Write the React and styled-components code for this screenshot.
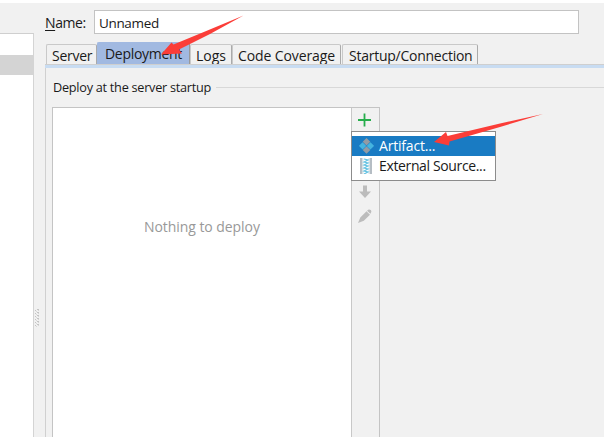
import React from "react";
import styled, { createGlobalStyle } from "styled-components";

const Global = createGlobalStyle`
  * { box-sizing: border-box; }
  body { margin: 0; background: #f1f1f1; overflow: hidden; }
`;

const Window = styled.div`
  position: relative;
  display: grid;
  grid-template-columns: 34px 11px 1fr;
  width: 604px;
  height: 437px;
  overflow: hidden;
  border-top: 3px solid #fff;
  background: #f1f1f1;
  color: #1a1a1a;
  font-family: "Open Sans", "Noto Sans", sans-serif;
  font-size: 14px;
  line-height: 20px;
  white-space: nowrap;
`;

const Text = styled.span`
  font-size: ${(p) => p.$size || 14}px;
  letter-spacing: ${(p) => p.$track || 0}px;
`;

const Tree = styled.aside`
  margin-top: 30px;
  padding-top: 21px;
  background: #fff;
  border-top: 1px solid #cfcfcf;
  border-right: 1px solid #d4d4d4;
`;

const TreeSelection = styled.div`
  height: 20px;
  background: #d4d4d4;
`;

const Splitter = styled.div`
  padding-top: 306px;
  svg { display: block; }
`;

const Editor = styled.main`
  display: flex;
  flex-direction: column;
  min-width: 0;
`;

const NameRow = styled.label`
  display: flex;
  flex: none;
  align-items: center;
  height: 24px;
  margin-top: 7px;
`;

const NameLabel = styled.div`
  width: 49px;
  padding-top: 1px;
  u { text-underline-offset: 2px; }
`;

const NameField = styled.div`
  width: 485px;
  height: 24px;
  padding: 2px 4px;
  border: 1px solid #c3c3c3;
  background: #fff;
`;

const Tabs = styled.nav`
  display: flex;
  flex: none;
  align-items: flex-end;
  height: 22px;
  margin-top: 8px;
  padding-left: 1px;
`;

const Tab = styled.div`
  width: ${(p) => p.$width}px;
  height: ${(p) => (p.$active ? 22 : 20)}px;
  margin-right: ${(p) => p.$gap || 0}px;
  padding-left: ${(p) => p.$pad}px;
  line-height: ${(p) => (p.$active ? 22 : 21)}px;
  border: 1px solid #c9c9c9;
  border-right-color: #aaa;
  border-bottom: 0;
  border-radius: 2px 2px 0 0;
  background: ${(p) => (p.$active ? "#a1b9e1" : "#f1f1f1")};
  ${(p) => p.$active && "border-color: #a1b9e1 #999 #a1b9e1 #a1b9e1;"}
`;

const Panel = styled.section`
  flex: 1;
  display: flex;
  flex-direction: column;
  border-left: 1px solid #d0d0d0;
`;

const Strip = styled.div`
  flex: none;
  height: 4px;
  margin-left: -1px;
  border-top: 1px solid #cfcfcf;
  background: #c8dcf2;
`;

const Body = styled.div`
  flex: 1;
  display: flex;
  flex-direction: column;
  padding-left: 6px;
`;

const GroupTitle = styled.div`
  display: flex;
  align-items: center;
  height: 20px;
  margin-top: 9px;
  padding-left: 1px;
  gap: 5px;
  &::after {
    content: "";
    flex: 1;
    height: 1px;
    background: #d8d8d8;
  }
`;

const ListFrame = styled.div`
  display: flex;
  flex: 1;
  width: 328px;
  margin-top: 10px;
  border: 1px solid #c4c4c4;
  border-bottom: 0;
`;

const EmptyList = styled.div`
  width: 299px;
  padding: 109px 0 0 91px;
  background: #fff;
  border-right: 1px solid #c8c8c8;
  color: #999;
`;

const Tools = styled.div`
  display: flex;
  flex-direction: column;
  padding: 5px 0 0 5px;
  svg { display: block; }
  svg + svg { margin-top: 58px; }
  svg + svg + svg { margin-top: 9px; }
`;

const Menu = styled.div`
  position: absolute;
  left: 351px;
  top: 128px;
  width: 145px;
  height: 50px;
  padding-top: 4px;
  border: 1px solid #8c8c8c;
  background: #fff;
`;

const MenuItem = styled.div`
  display: flex;
  align-items: center;
  gap: 5px;
  height: 20px;
  padding-left: 7px;
  background: ${(p) => (p.$active ? "#197bc3" : "#fff")};
  color: ${(p) => (p.$active ? "#fff" : "#1a1a1a")};
  svg { flex: none; }
`;

const Arrows = styled.svg`
  position: absolute;
  left: 0;
  top: -3px;
  pointer-events: none;
`;

const Grip = () => (
  <svg width="6" height="18" shapeRendering="crispEdges">
    {[0, 1, 2, 3, 4, 5].map((i) => (
      <g key={i} fill="#c4c4c4">
        <rect x="1" y={1 + i * 3} width="1" height="1" />
        <rect x="2" y={2 + i * 3} width="1" height="1" fill="#d8d8d8" />
        <rect x="3" y={i * 3} width="2" height="1" />
        <rect x="4" y={1 + i * 3} width="1" height="1" fill="#d5d5d5" />
      </g>
    ))}
  </svg>
);

const Plus = () => (
  <svg width="16" height="14" viewBox="0 0 16 14">
    <path d="M7.500.5v13M1 7h13" stroke="#27ae4c" strokeWidth="1.8" />
  </svg>
);

const Down = () => (
  <svg width="16" height="14" viewBox="0 0 16 14">
    <path d="M6 .5h4v6h4L8 13 2 6.500h4z" fill="#bcbcbc" />
  </svg>
);

const Pencil = () => (
  <svg width="16" height="16" viewBox="0 0 16 16">
    <path d="M1 15l2.300-5.500 6.200-6.200 3.500 3.500L6.800 12.700zM10.100 2.700l1-1q1.300-.8 2.700.4 1.100 1.300.2 2.700l-.7.9z" fill="#bcbcbc" />
  </svg>
);

const ArtifactIcon = () => (
  <svg width="15" height="16" viewBox="0 0 15 16">
    <path d="M7.500 0l3.800 3.800-3.800 3.800-3.800-3.800zM7.500 8.200l3.800 3.800-3.800 3.800L3.700 12z" fill="#929ba4" />
    <path d="M3.600 4.200l3.700 3.700-3.700 3.700L-.1 7.900zM11.400 4.200l3.700 3.700-3.700 3.700-3.700-3.700z" fill="#45b4df" />
  </svg>
);

const ArchiveIcon = () => (
  <svg width="15" height="16" viewBox="0 0 15 16">
    <path d="M1 0h2.500v16H1zM10.500 0h2.500v16h-2.500z" fill="#b5bdc4" />
    <path d="M3.500 0h1v16h-1zM9.500 0h1v16h-1z" fill="#dce3e7" />
    <path d="M5 1l4 1-4 2 4 1-4 2 4 1-4 2 4 1-4 2 4 1-4 2" fill="none" stroke="#64c2e2" strokeWidth="1.200" />
  </svg>
);

export default function App() {
  return (
    <>
      <Global />
      <Window>
        <Tree><TreeSelection /></Tree>
        <Splitter><Grip /></Splitter>
        <Editor>
          <NameRow>
            <NameLabel><Text $track={-0.4}><u>N</u>ame:</Text></NameLabel>
            <NameField><Text $size={13.5} $track={-0.35}>Unnamed</Text></NameField>
          </NameRow>
          <Tabs>
            <Tab $width={51} $pad={5}><Text $track={-0.25}>Server</Text></Tab>
            <Tab $width={93} $pad={7} $active><Text $track={-0.3}>Deployment</Text></Tab>
            <Tab $width={42} $pad={5}><Text>Logs</Text></Tab>
            <Tab $width={109} $pad={5} $gap={1}><Text $track={-0.1}>Code Coverage</Text></Tab>
            <Tab $width={136} $pad={6}><Text $track={-0.25}>Startup/Connection</Text></Tab>
          </Tabs>
          <Panel>
            <Strip />
            <Body>
              <GroupTitle><Text $size={12.7} $track={-0.26}>Deploy at the server startup</Text></GroupTitle>
              <ListFrame>
                <EmptyList><Text $track={-0.06}>Nothing to deploy</Text></EmptyList>
                <Tools><Plus /><Down /><Pencil /></Tools>
              </ListFrame>
            </Body>
          </Panel>
        </Editor>
        <Menu>
          <MenuItem $active><ArtifactIcon /><Text $track={-0.2}>Artifact...</Text></MenuItem>
          <MenuItem><ArchiveIcon /><Text $track={-0.36}>External Source...</Text></MenuItem>
        </Menu>
        <Arrows width="604" height="437" viewBox="0 0 604 437">
          <path d="M243.500 15.500L205 31.500 173.500 44.500 171.500 42.500 161 54.500 182 53.500 179 49.500 210 34z" fill="#fb3d38" />
          <path d="M543 114L500 123.500 447.500 136 446 132 434 142 449 145.500 449.500 141.500 500 127z" fill="#fb3d38" />
        </Arrows>
      </Window>
    </>
  );
}
